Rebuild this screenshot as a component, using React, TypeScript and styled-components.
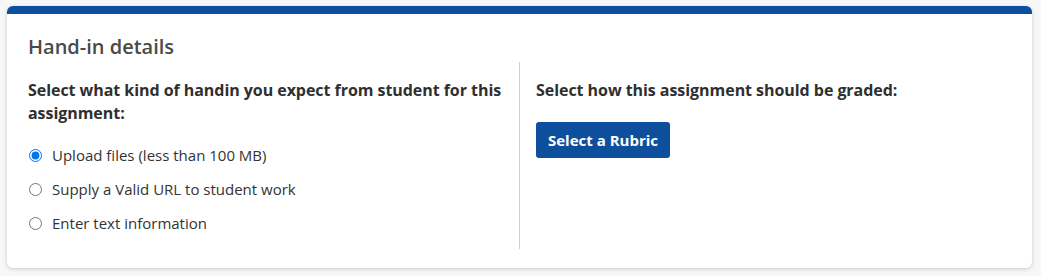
import styled, { createGlobalStyle } from "styled-components";

const GlobalStyle = createGlobalStyle`
  body {
    margin: 0;
    background: #f6f7f9;
    font-family: "Open Sans", Lato, sans-serif;
  }
`;

const options = [
  "Upload files (less than 100 MB)",
  "Supply a Valid URL to student work",
  "Enter text information",
];

export default function App() {
  return (
    <>
      <GlobalStyle />
      <Page>
        <Card>
          <Title>Hand-in details</Title>
          <Columns>
            <LeftColumn>
              <Question>
                Select what kind of handin you expect from student for this
                assignment:
              </Question>
              <OptionList>
                {options.map((label, i) => (
                  <Option key={label}>
                    <Radio type="radio" name="handin" defaultChecked={i === 0} />
                    {label}
                  </Option>
                ))}
              </OptionList>
            </LeftColumn>
            <RightColumn>
              <Question>Select how this assignment should be graded:</Question>
              <PrimaryButton>Select a Rubric</PrimaryButton>
            </RightColumn>
          </Columns>
        </Card>
      </Page>
    </>
  );
}

const Page = styled.div`
  padding: 6px 9px 7px 7px;
`;

const Card = styled.div`
  background: #fff;
  border-top: 8px solid #0d4f9c;
  border-radius: 6px;
  box-shadow: 0 1px 4px rgba(0, 0, 0, 0.18);
  padding: 0 21px 20px 21px;
  height: 262px;
  box-sizing: border-box;
`;

const Title = styled.h2`
  margin: 0;
  padding: 20px 0 0;
  font-size: 20px;
  font-weight: 600;
  line-height: 26px;
  color: #4a4a4a;
`;

const Columns = styled.div`
  display: flex;
  margin-top: 2px;
`;

const LeftColumn = styled.div`
  width: 491px;
  border-right: 1px solid #d0d0d0;
  padding: 17px 0 14px;
`;

const RightColumn = styled.div`
  flex: 1;
  padding: 17px 0 0 16px;
`;

const Question = styled.p`
  margin: 0;
  font-size: 16px;
  font-weight: 700;
  line-height: 23px;
  letter-spacing: -0.05px;
  color: #2f2f2f;
`;

const OptionList = styled.div`
  display: flex;
  flex-direction: column;
  gap: 11px;
  margin-top: 19px;
`;

const Option = styled.label`
  display: flex;
  align-items: center;
  gap: 10px;
  font-size: 15px;
  line-height: 23px;
  color: #333;
`;

const Radio = styled.input`
  margin: 0 0 0 1px;
  width: 13px;
  height: 13px;
  accent-color: #0a72e8;
`;

const PrimaryButton = styled.button`
  margin-top: 20px;
  height: 36px;
  padding: 0 12px;
  border: none;
  border-radius: 3px;
  background: #0d4f9c;
  color: #fff;
  font-family: inherit;
  font-size: 15px;
  font-weight: 700;
`;
